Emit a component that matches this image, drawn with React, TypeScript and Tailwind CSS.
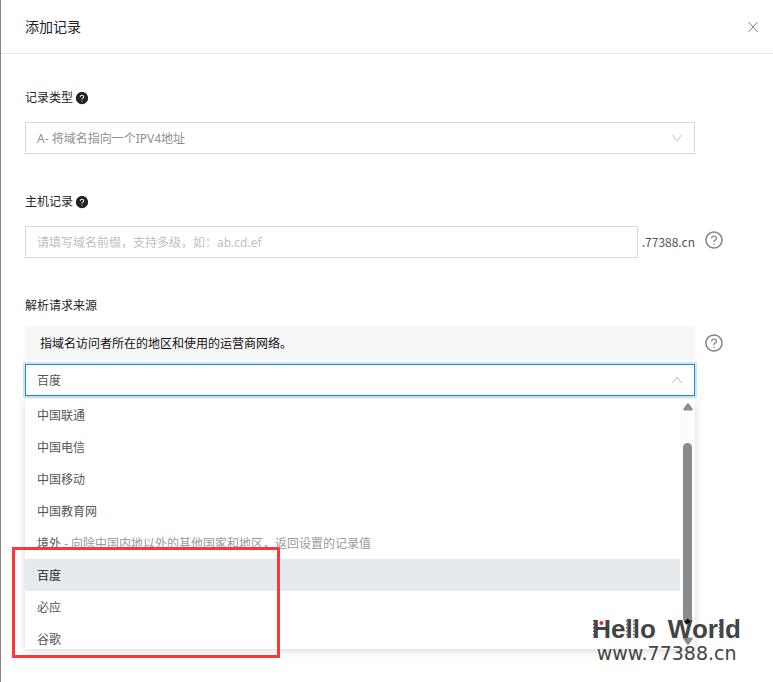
import { FC, ReactNode, useState } from "react";
import { AiFillQuestionCircle, AiOutlineQuestionCircle } from "react-icons/ai";

const sources = [
  { name: "中国联通" },
  { name: "中国电信" },
  { name: "中国移动" },
  { name: "中国教育网" },
  { name: "境外", note: " - 向除中国内地以外的其他国家和地区，返回设置的记录值" },
  { name: "百度" },
  { name: "必应" },
  { name: "谷歌" },
];

const Chevron: FC<{ up?: boolean }> = ({ up }) => (
  <svg
    viewBox="0 0 12 8"
    fill="none"
    stroke="#bfbfbf"
    className="pointer-events-none absolute right-3 top-3 h-2 w-3"
  >
    <path d={up ? "M1.500 7.200 6 1l4.500 6.200" : "M1.500 .8 6 7l4.500-6.200"} />
  </svg>
);

const FieldLabel: FC<{ htmlFor: string; help?: boolean; children: ReactNode }> = ({
  htmlFor,
  help,
  children,
}) => (
  <label htmlFor={htmlFor} className="flex h-5 items-center gap-0.5 text-[#262626]">
    {children}
    {help && <AiFillQuestionCircle className="size-3.5 text-[#222]" />}
  </label>
);

const HelpButton: FC = () => (
  <button type="button" aria-label="帮助" className="size-5 shrink-0 text-[#858585]">
    <AiOutlineQuestionCircle className="size-5" />
  </button>
);

const SourceMenu: FC<{ value: string; onPick: (name: string) => void }> = ({
  value,
  onPick,
}) => (
  <div className="absolute inset-x-0 top-full mt-[3px]">
    <div className="flex h-[250px] overflow-hidden bg-white shadow-[0_2px_8px_rgba(0,0,0,0.15)]">
      <ul role="listbox" className="min-w-0 flex-1">
        {sources.map((source) => (
          <li
            key={source.name}
            role="option"
            aria-selected={source.name === value}
            onClick={() => onPick(source.name)}
            className={
              source.name === value
                ? "h-8 cursor-pointer bg-[#e5eaee] px-3 leading-[34px] font-medium text-[#444]"
                : "h-8 cursor-pointer px-3 leading-[34px] text-[#555]"
            }
          >
            {source.name}
            {source.note && <span className="text-[#999]">{source.note}</span>}
          </li>
        ))}
      </ul>
      <div className="flex w-[15px] flex-col items-center bg-[#fcfcfc] py-1">
        <svg viewBox="0 0 10 8" className="h-2 w-2.5" fill="#8b8b8b">
          <path d="M4 .8q1-1 2 0l3.500 5q.8 1.700-1 1.700h-7q-1.800 0-1-1.700z" />
        </svg>
        <div className="mt-8 h-[180px] w-[9px] rounded-full bg-[#8b8b8b]" />
        <svg viewBox="0 0 10 8" className="mt-auto h-2 w-2.5" fill="#8b8b8b">
          <path d="M4 7.200q1 1 2 0l3.500-5q.8-1.700-1-1.700h-7q-1.800 0-1 1.700z" />
        </svg>
      </div>
    </div>
    {/* marks the search engine entries */}
    <div className="pointer-events-none absolute -left-[13px] top-[148px] h-[111px] w-[268px] border-3 border-[#fb3838]" />
  </div>
);

const Watermark: FC = () => (
  <div className="pointer-events-none absolute right-8 top-[615px] flex flex-col items-center text-[#444]">
    <div className="relative flex gap-3 font-['Liberation_Sans',sans-serif] text-[26px] leading-7 font-bold">
      <span>Hello</span>
      <span>World</span>
      {/* saw-tooth edges, the red bead and the black pin */}
      <svg viewBox="0 0 150 28" className="absolute inset-0 size-full" fill="none">
        <path
          d="M35 5v18M42 5v18M128.500 5v18M1.500 5v18"
          stroke="#444"
          strokeDasharray="1.500 2"
        />
        <circle cx="9.500" cy="8" r="2" fill="#ee2222" />
        <path d="M94 8l4-3" stroke="#111" strokeWidth="4" />
      </svg>
    </div>
    <div className="mt-0.5 font-['DejaVu_Sans'] text-[19px] leading-4">www.77388.cn</div>
  </div>
);

const App: FC = () => {
  const [host, setHost] = useState("");
  const [source, setSource] = useState("百度");

  return (
    <main className="relative min-h-screen border-l border-[#858585] bg-white font-['Noto_Sans','Noto_Sans_CJK_SC',sans-serif] text-xs">
      <header className="flex h-[54px] items-center justify-between border-b border-[#e8e8e8] pr-[15px] pl-6">
        <h1 className="text-sm text-[#222]">添加记录</h1>
        <button type="button" aria-label="关闭">
          <svg viewBox="0 0 10 12" className="h-3 w-2.5" fill="none" stroke="#858585">
            <path d="M.5 1l9 10M9.500 1l-9 10" />
          </svg>
        </button>
      </header>

      <form className="flex flex-col gap-[38px] pt-[34px] pr-[49px] pl-6">
        <div className="flex flex-col gap-3.5">
          <FieldLabel htmlFor="type" help>
            记录类型
          </FieldLabel>
          <div className="relative mr-[29px]">
            <select
              id="type"
              className="h-8 w-full appearance-none border border-[#d9d9d9] bg-white px-[11px] pt-0.5 text-[#8f8f8f] outline-none"
            >
              <option>A- 将域名指向一个IPV4地址</option>
            </select>
            <Chevron />
          </div>
        </div>

        <div className="flex flex-col gap-3.5">
          <FieldLabel htmlFor="host" help>
            主机记录
          </FieldLabel>
          <div className="flex gap-[9px]">
            <div className="flex min-w-0 flex-1 items-center gap-1">
              <input
                id="host"
                value={host}
                onChange={(e) => setHost(e.target.value)}
                placeholder="请填写域名前缀，支持多级，如：ab.cd.ef"
                className="h-8 min-w-0 flex-1 border border-[#d9d9d9] px-[11px] text-[#555] outline-none placeholder:text-[#bfbfbf]"
              />
              <span className="font-['Noto_Sans_CJK_SC',sans-serif] text-[#555]">.77388.cn</span>
            </div>
            <div className="pt-1">
              <HelpButton />
            </div>
          </div>
        </div>

        <div>
          <FieldLabel htmlFor="source">解析请求来源</FieldLabel>
          <div className="mt-2.5 flex items-center gap-[9px]">
            <p className="h-[34px] flex-1 bg-[#f6f6f6] px-[15px] leading-9 text-[#111]">
              指域名访问者所在的地区和使用的运营商网络。
            </p>
            <HelpButton />
          </div>
          <div className="relative mt-1 mr-[29px]">
            <select
              id="source"
              value={source}
              onChange={(e) => setSource(e.target.value)}
              className="h-8 w-full appearance-none border border-[#1f87d6] bg-white px-[11px] pt-0.5 text-[#555] shadow-[0_0_0_2px_rgba(31,135,214,0.22)] outline-none"
            >
              {sources.map(({ name }) => (
                <option key={name}>{name}</option>
              ))}
            </select>
            <Chevron up />
            <SourceMenu value={source} onPick={setSource} />
          </div>
        </div>
      </form>
      <Watermark />
    </main>
  );
};

export default App;
